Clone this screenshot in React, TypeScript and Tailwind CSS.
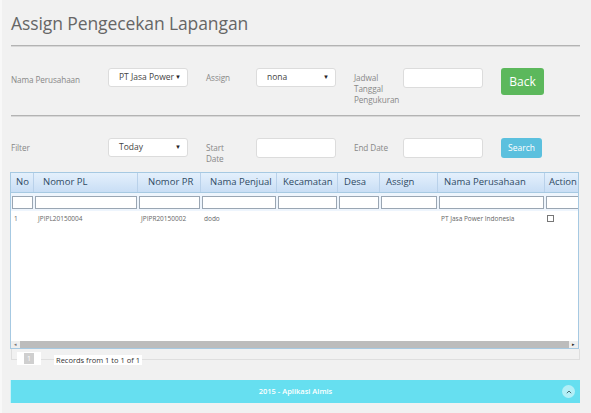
import React from "react";

const font = { fontFamily: '"Open Sans", "Noto Sans", sans-serif' };

const cols = [
  { name: "No", w: 23, pl: 5 },
  { name: "Nomor PL", w: 104, pl: 9 },
  { name: "Nomor PR", w: 63, pl: 10 },
  { name: "Nama Penjual", w: 76, pl: 9 },
  { name: "Kecamatan", w: 61, pl: 6 },
  { name: "Desa", w: 42, pl: 6 },
  { name: "Assign", w: 58, pl: 6 },
  { name: "Nama Perusahaan", w: 107, pl: 6 },
  { name: "Action", w: 40, pl: 4 },
];

const row = ["1", "JPIPL20150004", "JPIPR20150002", "dodo", "", "", "", "PT Jasa Power Indonesia", "cb"];

function Select({ value }: { value: string }) {
  return (
    <div className="w-[80px] h-[19px] bg-white border border-[#dcdcdc] rounded-[3px] flex items-center justify-between pl-[10px] pr-[6px] text-[8.5px] text-[#444] whitespace-nowrap">
      <span>{value}</span>
      <span className="text-[6px] text-[#222]">▼</span>
    </div>
  );
}

function Input() {
  return <div className="w-[80px] h-[20px] bg-white border border-[#dcdcdc] rounded-[3px]" />;
}

function Label({ children }: { children: React.ReactNode }) {
  return <div className="text-[8.2px] leading-[11px] tracking-[-0.1px] text-[#888] pt-[3px] whitespace-nowrap">{children}</div>;
}

export default function App() {
  return (
    <div className="w-[591px] h-[413px] bg-[#f1f1f1] relative overflow-hidden" style={font}>
      <div className="absolute left-0 top-0 bottom-0 w-[2px] bg-[#f8f8f8]" />
      <div className="pl-[10px] pr-[11px] pt-[10px]">
        <h1 className="text-[17.5px] leading-[26px] text-[#666] pl-[1px] tracking-[-0.1px]">Assign Pengecekan Lapangan</h1>
        <div className="mt-[9px] ml-[1px] h-[2px] bg-[#b3b3b3] border-b border-[#d8d8d8]" />

        <div className="flex items-start mt-[21px] ml-[1px] h-[28px]">
          <div className="w-[97px] pt-[3px]"><Label>Nama Perusahaan</Label></div>
          <Select value="PT Jasa Power" />
          <div className="w-[50px] ml-[18px] pt-[1px]"><Label>Assign</Label></div>
          <Select value="nona" />
          <div className="w-[49px] ml-[18px] pt-[1px]">
            <Label>Jadwal<br />Tanggal<br />Pengukuran</Label>
          </div>
          <Input />
          <button className="ml-[18px] w-[43px] h-[27px] bg-[#5cb85c] rounded-[3px] text-white text-[12px] leading-[27px] text-center">Back</button>
        </div>

        <div className="mt-[19px] ml-[1px] h-[2px] bg-[#b3b3b3] border-b border-[#d8d8d8]" />

        <div className="flex items-start mt-[21px] ml-[1px] h-[30px]">
          <div className="w-[97px] pt-[1px]"><Label>Filter</Label></div>
          <Select value="Today" />
          <div className="w-[50px] ml-[18px] pt-[1px]"><Label>Start<br />Date</Label></div>
          <Input />
          <div className="w-[49px] ml-[18px] pt-[1px]"><Label>End Date</Label></div>
          <Input />
          <button className="ml-[18px] w-[41px] h-[20px] bg-[#5bc0de] rounded-[3px] text-white text-[8.5px] leading-[20px] text-center">Search</button>
        </div>

        <div className="mt-[4px] w-[569px] border border-[#a6c9e2] bg-white overflow-hidden">
          <div className="flex h-[20px] bg-gradient-to-b from-[#e4f0fc] to-[#c9def5] border-b border-[#a6c9e2] whitespace-nowrap">
            {cols.map((c, i) => (
              <div
                key={i}
                className="shrink-0 h-full flex items-center text-[9.5px] text-[#2f4a63] border-r border-[#b9d1ea]"
                style={{ width: c.w, paddingLeft: c.pl }}
              >
                {c.name}
              </div>
            ))}
          </div>
          <div className="flex h-[18px] items-center bg-[#eef5fd]">
            {cols.map((c, i) => (
              <div key={i} className="shrink-0 h-full flex items-center px-[1px]" style={{ width: c.w }}>
                <div className="w-full h-[13px] bg-white border border-[#9aa6b3]" />
              </div>
            ))}
          </div>
          <div className="h-[130px] relative">
            <div className="flex h-[13px] items-center pt-[2px]">
              {cols.map((c, i) => (
                <div key={i} className="shrink-0 text-[6.5px] text-[#666] pl-[3px] whitespace-nowrap" style={{ width: c.w }}>
                  {row[i] === "cb" ? (
                    <div className="w-[7px] h-[7px] border border-[#777] bg-white -ml-[1px]" />
                  ) : (
                    <span className={i === 1 ? "pl-[1px]" : ""}>{row[i]}</span>
                  )}
                </div>
              ))}
            </div>
          </div>
          <div className="flex h-[7px] items-stretch bg-[#e8e8e8]">
            <div className="w-[9px] flex items-center justify-center text-[5px] text-[#777] bg-[#eeeeee]">◂</div>
            <div className="flex-1 bg-[#bcbcbc]" />
            <div className="w-[9px] flex items-center justify-center text-[5px] text-[#222] bg-[#eeeeee]">▸</div>
          </div>
        </div>

        <div className="relative h-[17px] ml-[1px]">
          <div className="absolute left-0 right-0 top-[0px] h-[11px] border border-t-0 border-[#dedede] bg-[#f1f1f1]" />
          <div className="absolute left-[6px] top-[3px] w-[24px] h-[13px] bg-white flex items-center justify-center">
            <div className="w-[10px] h-[11px] bg-[#cfcfcf] text-white text-[7px] leading-[11px] text-center">1</div>
          </div>
          <div className="absolute left-[43px] top-[6px] bg-white px-[2px] text-[7.5px] leading-[10px] text-[#333] whitespace-nowrap">Records from 1 to 1 of 1</div>
        </div>

        <div className="mt-[14px] h-[23px] bg-[#66dff0] border-l border-[#c8f3f9] relative flex items-center justify-center">
          <span className="text-white text-[7.5px] font-semibold">2015 - Aplikasi Almis</span>
          <div className="absolute right-[5px] top-[5px] w-[13px] h-[13px] rounded-full bg-[#b3eff7] flex items-center justify-center">
            <svg width="6" height="4" viewBox="0 0 6 4"><path d="M0.8 3.2 L3 1 L5.2 3.2" fill="none" stroke="#4a6a70" strokeWidth="1" /></svg>
          </div>
        </div>
      </div>
    </div>
  );
}
